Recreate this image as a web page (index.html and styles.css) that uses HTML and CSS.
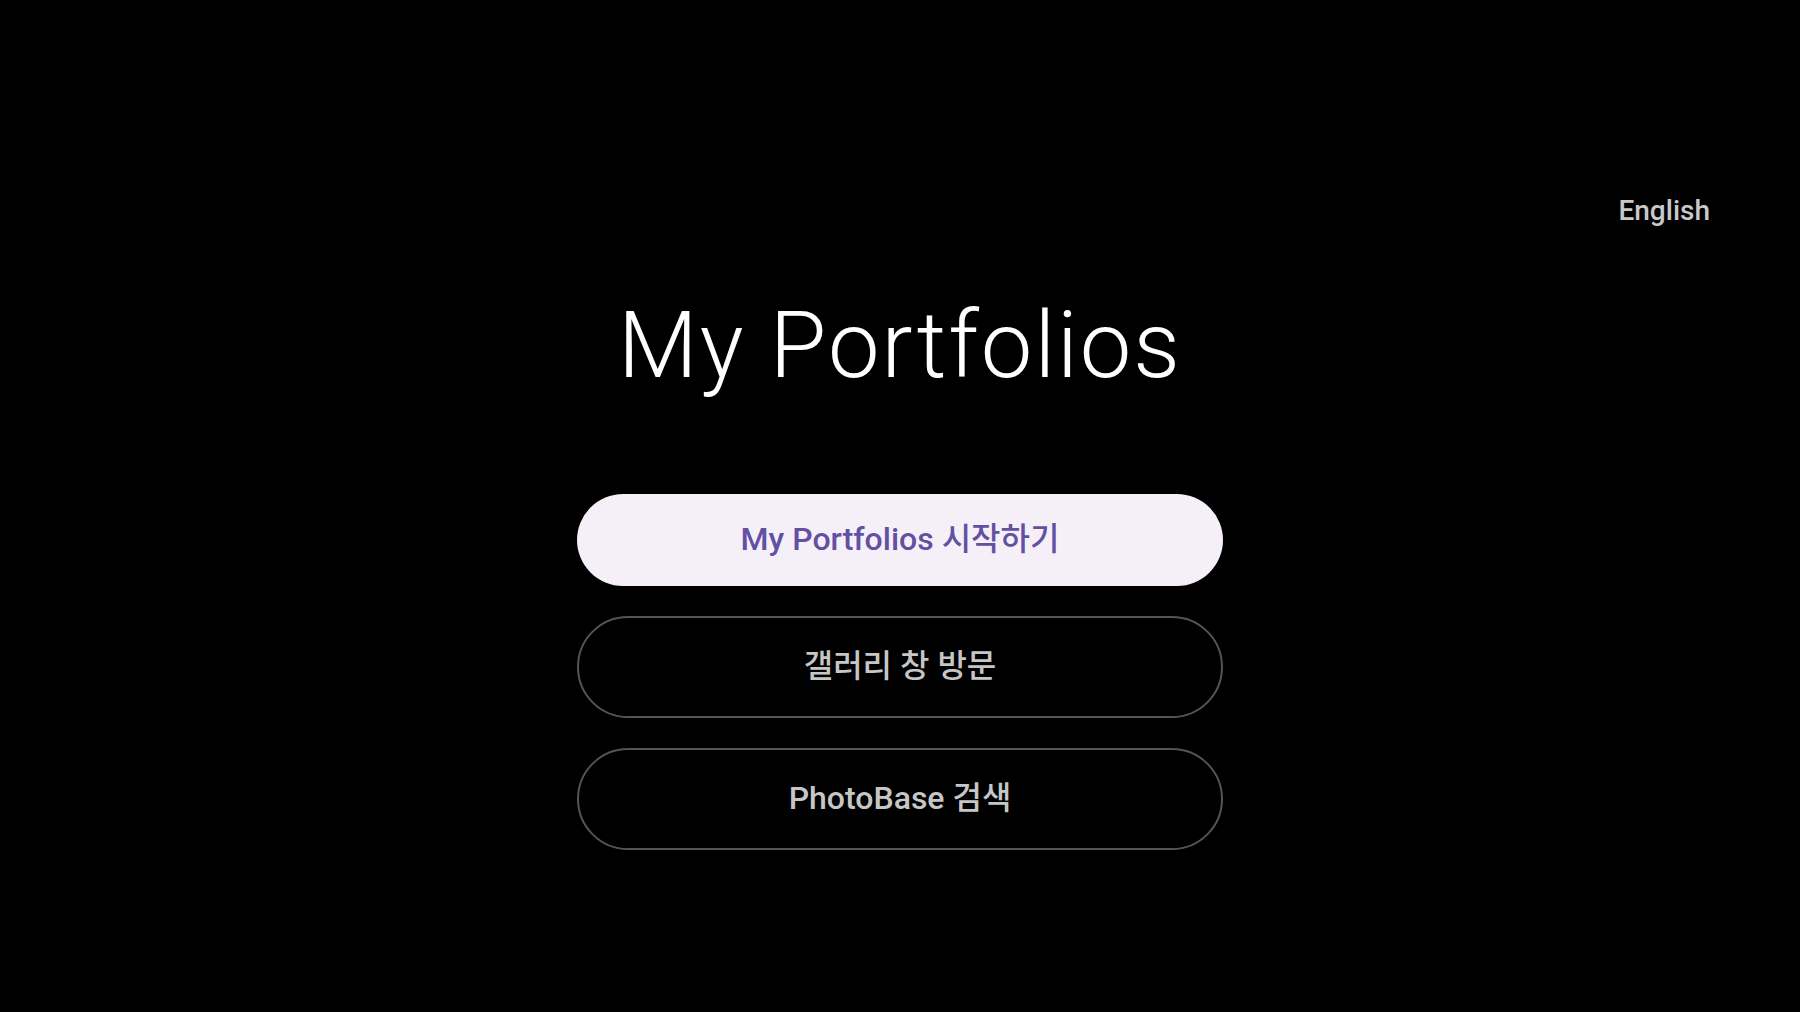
FILE: index.html
```html
<!DOCTYPE html>
<html lang="ko">
<head>
<meta charset="utf-8">
<title>My Portfolios</title>
<link rel="stylesheet" href="styles.css">
</head>
<body>
<div class="page">
  <header class="topbar">
    <span class="lang">English</span>
  </header>
  <main class="main">
    <h1 class="title">My Portfolios</h1>
    <div class="actions">
      <button class="btn btn-primary">My Portfolios 시작하기</button>
      <button class="btn btn-outline">갤러리 창 방문</button>
      <button class="btn btn-outline">PhotoBase 검색</button>
    </div>
  </main>
</div>
</body>
</html>
```

FILE: styles.css
```css
html, body {
  margin: 0;
  padding: 0;
  background: #000;
}
body {
  font-family: Roboto, "Noto Sans CJK KR", "Noto Sans", sans-serif;
  color: #fff;
}
.page {
  width: 1800px;
  height: 1012px;
  display: flex;
  flex-direction: column;
}
.topbar {
  display: flex;
  justify-content: flex-end;
  padding: 197px 90px 0 0;
}
.lang {
  font-size: 28px;
  line-height: 28px;
  font-weight: 500;
  color: #c9c9c9;
}
.main {
  display: flex;
  flex-direction: column;
  align-items: center;
}
.title {
  margin: 75px 0 0 0;
  font-size: 92px;
  line-height: 92px;
  font-weight: 300;
  color: #fff;
  letter-spacing: 2px;
}
.actions {
  margin-top: 102px;
  display: flex;
  flex-direction: column;
  align-items: center;
  gap: 30px;
}
.btn {
  width: 646px;
  border-radius: 60px;
  font-family: Roboto, "Noto Sans CJK KR", sans-serif;
  font-size: 32px;
  line-height: 32px;
  font-weight: 500;
  display: flex;
  align-items: center;
  justify-content: center;
  padding: 0 0 2px 0;
  cursor: pointer;
}
.btn-primary {
  height: 92px;
  background: #f5f0f8;
  color: #6350a3;
  border: none;
}
.btn-outline {
  height: 102px;
  background: #000;
  color: #c6c6c6;
  border: 2px solid #545454;
}
```
